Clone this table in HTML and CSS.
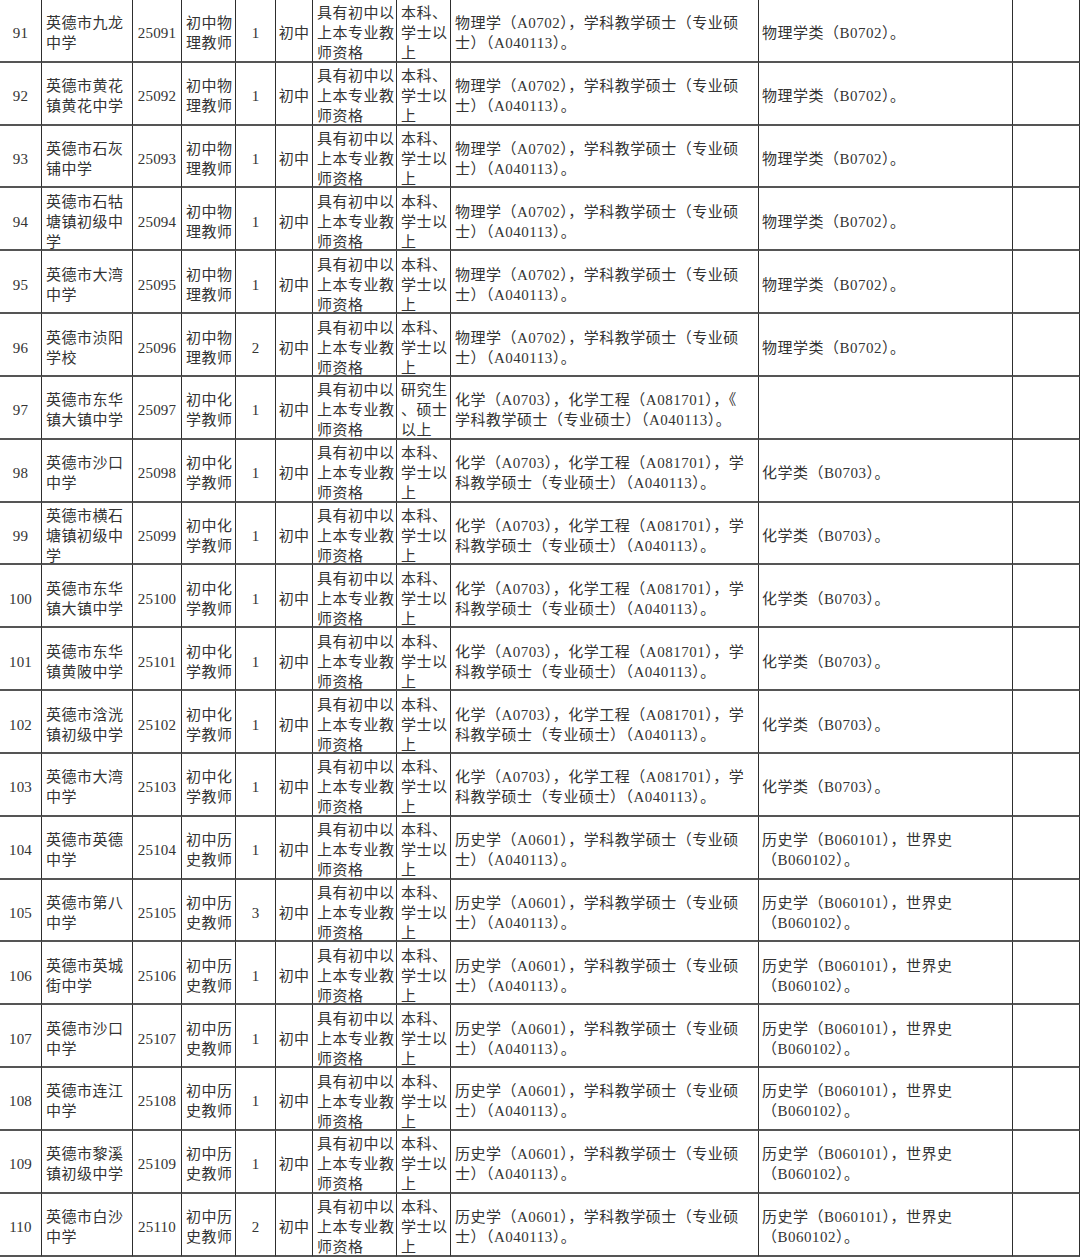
FILE: index.html
```html
<!DOCTYPE html>
<html lang="zh-CN">
<head>
<meta charset="utf-8">
<title>岗位表</title>
<link rel="stylesheet" href="styles.css">
</head>
<body>
<div class="sheet">
  <div class="c c1">91</div><div class="c c2">英德市九龙<br>中学</div><div class="c c3">25091</div><div class="c c4">初中物<br>理教师</div><div class="c c5">1</div><div class="c c6">初中</div><div class="c c7">具有初中以<br>上本专业教<br>师资格</div><div class="c c8">本科、<br>学士以<br>上</div><div class="c c9">物理学（A0702），学科教学硕士（专业硕<br>士）（A040113）。</div><div class="c c10">物理学类（B0702）。</div><div class="c c11"></div>
  <div class="c c1">92</div><div class="c c2">英德市黄花<br>镇黄花中学</div><div class="c c3">25092</div><div class="c c4">初中物<br>理教师</div><div class="c c5">1</div><div class="c c6">初中</div><div class="c c7">具有初中以<br>上本专业教<br>师资格</div><div class="c c8">本科、<br>学士以<br>上</div><div class="c c9">物理学（A0702），学科教学硕士（专业硕<br>士）（A040113）。</div><div class="c c10">物理学类（B0702）。</div><div class="c c11"></div>
  <div class="c c1">93</div><div class="c c2">英德市石灰<br>铺中学</div><div class="c c3">25093</div><div class="c c4">初中物<br>理教师</div><div class="c c5">1</div><div class="c c6">初中</div><div class="c c7">具有初中以<br>上本专业教<br>师资格</div><div class="c c8">本科、<br>学士以<br>上</div><div class="c c9">物理学（A0702），学科教学硕士（专业硕<br>士）（A040113）。</div><div class="c c10">物理学类（B0702）。</div><div class="c c11"></div>
  <div class="c c1">94</div><div class="c c2">英德市石牯<br>塘镇初级中<br>学</div><div class="c c3">25094</div><div class="c c4">初中物<br>理教师</div><div class="c c5">1</div><div class="c c6">初中</div><div class="c c7">具有初中以<br>上本专业教<br>师资格</div><div class="c c8">本科、<br>学士以<br>上</div><div class="c c9">物理学（A0702），学科教学硕士（专业硕<br>士）（A040113）。</div><div class="c c10">物理学类（B0702）。</div><div class="c c11"></div>
  <div class="c c1">95</div><div class="c c2">英德市大湾<br>中学</div><div class="c c3">25095</div><div class="c c4">初中物<br>理教师</div><div class="c c5">1</div><div class="c c6">初中</div><div class="c c7">具有初中以<br>上本专业教<br>师资格</div><div class="c c8">本科、<br>学士以<br>上</div><div class="c c9">物理学（A0702），学科教学硕士（专业硕<br>士）（A040113）。</div><div class="c c10">物理学类（B0702）。</div><div class="c c11"></div>
  <div class="c c1">96</div><div class="c c2">英德市浈阳<br>学校</div><div class="c c3">25096</div><div class="c c4">初中物<br>理教师</div><div class="c c5">2</div><div class="c c6">初中</div><div class="c c7">具有初中以<br>上本专业教<br>师资格</div><div class="c c8">本科、<br>学士以<br>上</div><div class="c c9">物理学（A0702），学科教学硕士（专业硕<br>士）（A040113）。</div><div class="c c10">物理学类（B0702）。</div><div class="c c11"></div>
  <div class="c c1">97</div><div class="c c2">英德市东华<br>镇大镇中学</div><div class="c c3">25097</div><div class="c c4">初中化<br>学教师</div><div class="c c5">1</div><div class="c c6">初中</div><div class="c c7">具有初中以<br>上本专业教<br>师资格</div><div class="c c8">研究生<br>、硕士<br>以上</div><div class="c c9">化学（A0703），化学工程（A081701），《<br>学科教学硕士（专业硕士）（A040113）。</div><div class="c c10"></div><div class="c c11"></div>
  <div class="c c1">98</div><div class="c c2">英德市沙口<br>中学</div><div class="c c3">25098</div><div class="c c4">初中化<br>学教师</div><div class="c c5">1</div><div class="c c6">初中</div><div class="c c7">具有初中以<br>上本专业教<br>师资格</div><div class="c c8">本科、<br>学士以<br>上</div><div class="c c9">化学（A0703），化学工程（A081701），学<br>科教学硕士（专业硕士）（A040113）。</div><div class="c c10">化学类（B0703）。</div><div class="c c11"></div>
  <div class="c c1">99</div><div class="c c2">英德市横石<br>塘镇初级中<br>学</div><div class="c c3">25099</div><div class="c c4">初中化<br>学教师</div><div class="c c5">1</div><div class="c c6">初中</div><div class="c c7">具有初中以<br>上本专业教<br>师资格</div><div class="c c8">本科、<br>学士以<br>上</div><div class="c c9">化学（A0703），化学工程（A081701），学<br>科教学硕士（专业硕士）（A040113）。</div><div class="c c10">化学类（B0703）。</div><div class="c c11"></div>
  <div class="c c1">100</div><div class="c c2">英德市东华<br>镇大镇中学</div><div class="c c3">25100</div><div class="c c4">初中化<br>学教师</div><div class="c c5">1</div><div class="c c6">初中</div><div class="c c7">具有初中以<br>上本专业教<br>师资格</div><div class="c c8">本科、<br>学士以<br>上</div><div class="c c9">化学（A0703），化学工程（A081701），学<br>科教学硕士（专业硕士）（A040113）。</div><div class="c c10">化学类（B0703）。</div><div class="c c11"></div>
  <div class="c c1">101</div><div class="c c2">英德市东华<br>镇黄陂中学</div><div class="c c3">25101</div><div class="c c4">初中化<br>学教师</div><div class="c c5">1</div><div class="c c6">初中</div><div class="c c7">具有初中以<br>上本专业教<br>师资格</div><div class="c c8">本科、<br>学士以<br>上</div><div class="c c9">化学（A0703），化学工程（A081701），学<br>科教学硕士（专业硕士）（A040113）。</div><div class="c c10">化学类（B0703）。</div><div class="c c11"></div>
  <div class="c c1">102</div><div class="c c2">英德市浛洸<br>镇初级中学</div><div class="c c3">25102</div><div class="c c4">初中化<br>学教师</div><div class="c c5">1</div><div class="c c6">初中</div><div class="c c7">具有初中以<br>上本专业教<br>师资格</div><div class="c c8">本科、<br>学士以<br>上</div><div class="c c9">化学（A0703），化学工程（A081701），学<br>科教学硕士（专业硕士）（A040113）。</div><div class="c c10">化学类（B0703）。</div><div class="c c11"></div>
  <div class="c c1">103</div><div class="c c2">英德市大湾<br>中学</div><div class="c c3">25103</div><div class="c c4">初中化<br>学教师</div><div class="c c5">1</div><div class="c c6">初中</div><div class="c c7">具有初中以<br>上本专业教<br>师资格</div><div class="c c8">本科、<br>学士以<br>上</div><div class="c c9">化学（A0703），化学工程（A081701），学<br>科教学硕士（专业硕士）（A040113）。</div><div class="c c10">化学类（B0703）。</div><div class="c c11"></div>
  <div class="c c1">104</div><div class="c c2">英德市英德<br>中学</div><div class="c c3">25104</div><div class="c c4">初中历<br>史教师</div><div class="c c5">1</div><div class="c c6">初中</div><div class="c c7">具有初中以<br>上本专业教<br>师资格</div><div class="c c8">本科、<br>学士以<br>上</div><div class="c c9">历史学（A0601），学科教学硕士（专业硕<br>士）（A040113）。</div><div class="c c10">历史学（B060101），世界史<br>（B060102）。</div><div class="c c11"></div>
  <div class="c c1">105</div><div class="c c2">英德市第八<br>中学</div><div class="c c3">25105</div><div class="c c4">初中历<br>史教师</div><div class="c c5">3</div><div class="c c6">初中</div><div class="c c7">具有初中以<br>上本专业教<br>师资格</div><div class="c c8">本科、<br>学士以<br>上</div><div class="c c9">历史学（A0601），学科教学硕士（专业硕<br>士）（A040113）。</div><div class="c c10">历史学（B060101），世界史<br>（B060102）。</div><div class="c c11"></div>
  <div class="c c1">106</div><div class="c c2">英德市英城<br>街中学</div><div class="c c3">25106</div><div class="c c4">初中历<br>史教师</div><div class="c c5">1</div><div class="c c6">初中</div><div class="c c7">具有初中以<br>上本专业教<br>师资格</div><div class="c c8">本科、<br>学士以<br>上</div><div class="c c9">历史学（A0601），学科教学硕士（专业硕<br>士）（A040113）。</div><div class="c c10">历史学（B060101），世界史<br>（B060102）。</div><div class="c c11"></div>
  <div class="c c1">107</div><div class="c c2">英德市沙口<br>中学</div><div class="c c3">25107</div><div class="c c4">初中历<br>史教师</div><div class="c c5">1</div><div class="c c6">初中</div><div class="c c7">具有初中以<br>上本专业教<br>师资格</div><div class="c c8">本科、<br>学士以<br>上</div><div class="c c9">历史学（A0601），学科教学硕士（专业硕<br>士）（A040113）。</div><div class="c c10">历史学（B060101），世界史<br>（B060102）。</div><div class="c c11"></div>
  <div class="c c1">108</div><div class="c c2">英德市连江<br>中学</div><div class="c c3">25108</div><div class="c c4">初中历<br>史教师</div><div class="c c5">1</div><div class="c c6">初中</div><div class="c c7">具有初中以<br>上本专业教<br>师资格</div><div class="c c8">本科、<br>学士以<br>上</div><div class="c c9">历史学（A0601），学科教学硕士（专业硕<br>士）（A040113）。</div><div class="c c10">历史学（B060101），世界史<br>（B060102）。</div><div class="c c11"></div>
  <div class="c c1">109</div><div class="c c2">英德市黎溪<br>镇初级中学</div><div class="c c3">25109</div><div class="c c4">初中历<br>史教师</div><div class="c c5">1</div><div class="c c6">初中</div><div class="c c7">具有初中以<br>上本专业教<br>师资格</div><div class="c c8">本科、<br>学士以<br>上</div><div class="c c9">历史学（A0601），学科教学硕士（专业硕<br>士）（A040113）。</div><div class="c c10">历史学（B060101），世界史<br>（B060102）。</div><div class="c c11"></div>
  <div class="c c1">110</div><div class="c c2">英德市白沙<br>中学</div><div class="c c3">25110</div><div class="c c4">初中历<br>史教师</div><div class="c c5">2</div><div class="c c6">初中</div><div class="c c7">具有初中以<br>上本专业教<br>师资格</div><div class="c c8">本科、<br>学士以<br>上</div><div class="c c9">历史学（A0601），学科教学硕士（专业硕<br>士）（A040113）。</div><div class="c c10">历史学（B060101），世界史<br>（B060102）。</div><div class="c c11"></div>
</div>
</body>
</html>
```

FILE: styles.css
```css
html, body {
  margin: 0;
  padding: 0;
  background: #ffffff;
}

.sheet {
  display: grid;
  grid-template-columns: 42px 91px 49px 54px 40px 37px 84px 54px 308px 254px 67px;
  grid-auto-rows: 62.83px;
  width: 1080px;
  font-family: "Liberation Serif", "Noto Sans CJK SC", serif;
  font-size: 15px;
  line-height: 20px;
  letter-spacing: 0.5px;
  color: #333333;
}

.c {
  box-sizing: border-box;
  display: flex;
  flex-direction: column;
  justify-content: center;
  align-items: flex-start;
  padding: 6px 1px 0 4px;
  border-right: 1px solid #2e2e2e;
  border-bottom: 2px solid #555555;
  white-space: nowrap;
}

.c1, .c3, .c5, .c6 {
  align-items: center;
  text-align: center;
  padding-left: 1px;
  padding-right: 1px;
  letter-spacing: 0.2px;
}

.c10 {
  padding-left: 3px;
}
```
